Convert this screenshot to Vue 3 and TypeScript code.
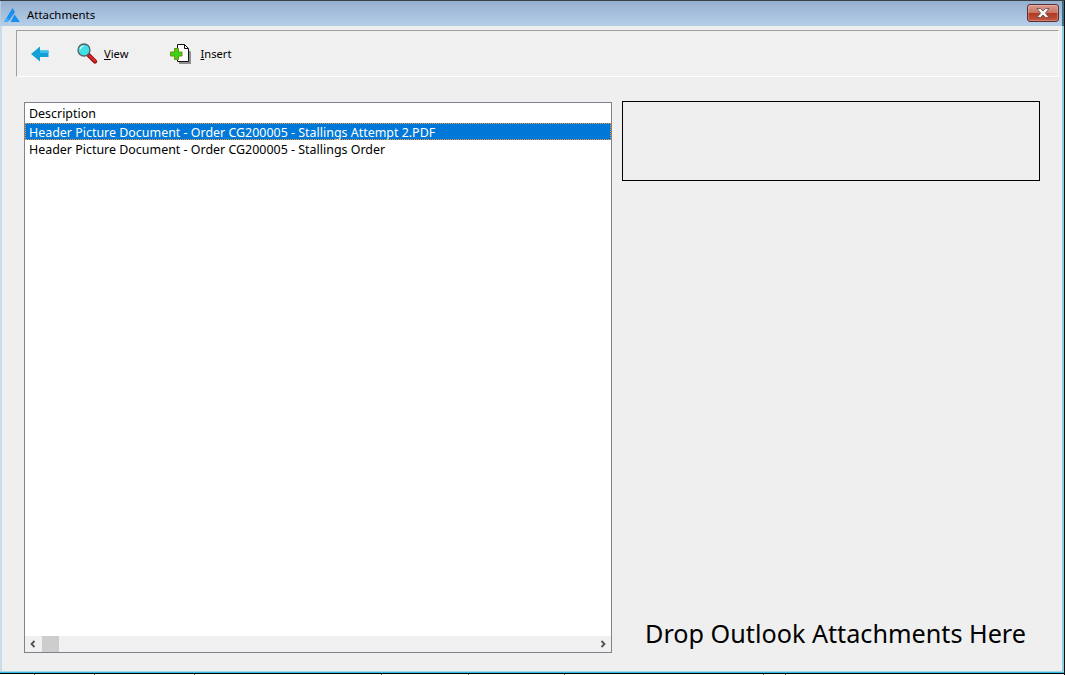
<script setup lang="ts">
const rows: { label: string; selected: boolean }[] = [
  { label: 'Header Picture Document - Order CG200005 - Stallings Attempt 2.PDF', selected: true },
  { label: 'Header Picture Document - Order CG200005 - Stallings Order', selected: false },
]
const ticks: number[] = [34, 60, 100, 187, 87, 96, 199, 22]
</script>

<template>
  <div class="window">
    <header class="titlebar">
      <svg class="logo" width="16" height="14" viewBox="0 0 16 14">
        <path d="M8.5 0 L11 4 L5.5 12 L3 14 L0 14 Z" fill="#1a90ee" />
        <path d="M10.5 6.5 L16 14 L6.5 14 Z" fill="#1a90ee" />
        <path d="M2.5 10.5 L5 10.5 L3 14 L0 14 Z" fill="#45b2fb" />
      </svg>
      <span class="title">Attachments</span>
      <button class="close" type="button" aria-label="Close">
        <svg width="14" height="10" viewBox="0 0 14 10">
          <path d="M1 0.5 H4.5 L7 3 L9.5 0.5 H13 L9.5 5 L13 9.5 H9.5 L7 7 L4.5 9.5 H1 L4.5 5 Z" fill="#f4f4f4" stroke="#5f4a4a" stroke-width="0.8" />
        </svg>
      </button>
    </header>

    <div class="body">
      <nav class="toolbar">
        <button class="tool back" type="button" aria-label="Back">
          <svg width="18" height="16" viewBox="0 0 18 16">
            <path d="M0 8 L9 0.5 V4.5 H17.5 V11 H9 V15.5 Z" fill="#139fd8" />
            <path d="M9 4.5 H17.5 V7 H9 Z" fill="#3cbdea" />
          </svg>
        </button>
        <button class="tool view" type="button">
          <svg width="22" height="22" viewBox="0 0 22 22">
            <path d="M11.5 12 L18 18.5" stroke="#8f1515" stroke-width="4.4" stroke-linecap="round" />
            <path d="M12.5 13 L18 18" stroke="#e52626" stroke-width="2.2" stroke-linecap="round" />
            <circle cx="7" cy="7" r="6" fill="#3fe0e6" stroke="#5a6066" stroke-width="1.3" />
            <path d="M3.2 6.5 A3.9 3.9 0 0 1 6.5 3.2" fill="none" stroke="#d8fcfc" stroke-width="1.3" />
          </svg>
          <span class="tool-label"><u>V</u>iew</span>
        </button>
        <button class="tool insert" type="button">
          <svg width="22" height="20" viewBox="0 0 22 20">
            <path d="M9 3 H16 L21 8 V20 H9 Z" fill="#8f8f8f" />
            <path d="M7.5 0.5 H14.5 L18.5 4.5 V17.5 H7.5 Z" fill="#fff" stroke="#111" />
            <path d="M14.5 0.5 V4.5 H18.5" fill="none" stroke="#111" />
            <path d="M4.5 4.5 H8.5 V8 H12 V12 H8.5 V15.5 H4.5 V12 H0.5 V8 H4.5 Z" fill="#35d815" stroke="#7b8a10" />
          </svg>
          <span class="tool-label"><u>I</u>nsert</span>
        </button>
      </nav>

      <main class="content">
        <section class="list">
          <div class="list-head">Description</div>
          <div class="list-rows">
            <div v-for="row in rows" :key="row.label" class="row" :class="{ selected: row.selected }">{{ row.label }}</div>
          </div>
          <div class="hscroll">
            <svg class="arrow" width="8" height="8" viewBox="0 0 8 8">
              <path d="M5.5 1 L2.5 4 L5.5 7" fill="none" stroke="#505050" stroke-width="1.8" />
            </svg>
            <div class="thumb"></div>
            <svg class="arrow end" width="8" height="8" viewBox="0 0 8 8">
              <path d="M2.5 1 L5.5 4 L2.5 7" fill="none" stroke="#505050" stroke-width="1.8" />
            </svg>
          </div>
        </section>

        <aside class="side">
          <div class="preview"></div>
          <p class="drop">Drop Outlook Attachments Here</p>
        </aside>
      </main>
    </div>

    <footer class="strip">
      <div class="edge"></div>
      <div class="ticks">
        <span v-for="(t, i) in ticks" :key="i" class="tick" :style="{ marginLeft: t + 'px' }"></span>
      </div>
    </footer>
  </div>
</template>

<style>
html, body { margin: 0; background: #f0f0f0; overflow: hidden; }
</style>

<style scoped>
.window {
  width: 1065px;
  height: 675px;
  display: flex;
  flex-direction: column;
  box-sizing: border-box;
  font-family: "Noto Sans", "Liberation Sans", sans-serif;
  color: #000;
  overflow: hidden;
  border-top: 1px solid #3a4048;
  border-right: 1px solid #111;
}
.titlebar {
  height: 25px;
  flex: none;
  display: flex;
  align-items: center;
  padding: 0 3px 0 3px;
  background: linear-gradient(#95b0cf, #b6cee8);
  border-left: 1px solid #b7cde0;
  border-right: 2px solid #3f6f86;
}
.logo { flex: none; margin-top: 2px; }
.title { margin-left: 7px; font-size: 11.4px; margin-top: 2px; }
.close {
  margin-left: auto;
  margin-top: -2px;
  width: 32px;
  height: 18px;
  padding: 0;
  display: flex;
  align-items: center;
  justify-content: center;
  border: 1px solid #5b2f2f;
  border-radius: 3px;
  background: linear-gradient(#d99a8d 0, #cc7566 48%, #b03a22 52%, #c4553f 100%);
  box-shadow: inset 0 0 0 1px rgba(255, 255, 255, 0.25);
}
.body {
  flex: 1;
  min-height: 0;
  display: flex;
  flex-direction: column;
  background: #efefef;
  border-left: 2px solid #c9dcec;
  border-right: 2px solid #8fcbe0;
  padding: 4px 3px 18px 14px;
}
.toolbar {
  height: 47px;
  flex: none;
  display: flex;
  align-items: center;
  box-sizing: border-box;
  background: #f0f0f0;
  border-top: 1px solid #a0a0a0;
  border-left: 1px solid #a0a0a0;
  border-right: 1px solid #fff;
  border-bottom: 1px solid #fff;
}
.tool {
  display: flex;
  align-items: center;
  padding: 0;
  border: 0;
  background: none;
  font: inherit;
  font-size: 11.2px;
  color: #000;
}
.back { margin-left: 14px; }
.view { margin-left: 28px; }
.insert { margin-left: 42px; }
.tool-label { margin-left: 5px; }
.insert .tool-label { margin-left: 8px; }
.content {
  flex: 1;
  min-height: 0;
  display: flex;
  margin-top: 24px;
  margin-left: 8px;
  margin-right: 19px;
}
.list {
  width: 588px;
  flex: none;
  display: flex;
  flex-direction: column;
  box-sizing: border-box;
  margin-top: 1px;
  background: #fff;
  border: 1px solid #82828c;
  font-size: 12.44px;
}
.list-head { height: 20px; line-height: 21px; padding-left: 4px; flex: none; }
.list-rows { flex: 1; min-height: 0; }
.row {
  height: 18px;
  line-height: 20px;
  padding-left: 4px;
  white-space: nowrap;
  box-sizing: border-box;
}
.row.selected {
  height: 17px;
  line-height: 19px;
  background: #0078d7;
  color: #fff;
  outline: 1px dotted #f0983c;
  outline-offset: -1px;
}
.hscroll {
  height: 16px;
  flex: none;
  display: flex;
  align-items: center;
  background: #f0f0f0;
}
.arrow { margin-left: 4px; flex: none; }
.arrow.end { margin-left: auto; margin-right: 4px; }
.thumb { width: 17px; height: 16px; margin-left: 5px; background: #cdcdcd; }
.side {
  width: 418px;
  flex: none;
  margin-left: 10px;
  display: flex;
  flex-direction: column;
}
.preview {
  height: 80px;
  flex: none;
  box-sizing: border-box;
  border: 1px solid #000;
}
.drop {
  margin: auto 0 0;
  text-align: center;
  font-size: 25.2px;
  line-height: 38px;
  padding: 0 0 1px 9px;
  white-space: nowrap;
}
.strip { flex: none; }
.edge { height: 2px; background: linear-gradient(#a6d8e6 50%, #32bde0 50%); }
.ticks {
  height: 1px;
  display: flex;
  background: #fff;
  border-top: 1px solid #000;
}
.tick { width: 1px; height: 1px; background: #555; flex: none; margin-right: -1px; }
</style>
